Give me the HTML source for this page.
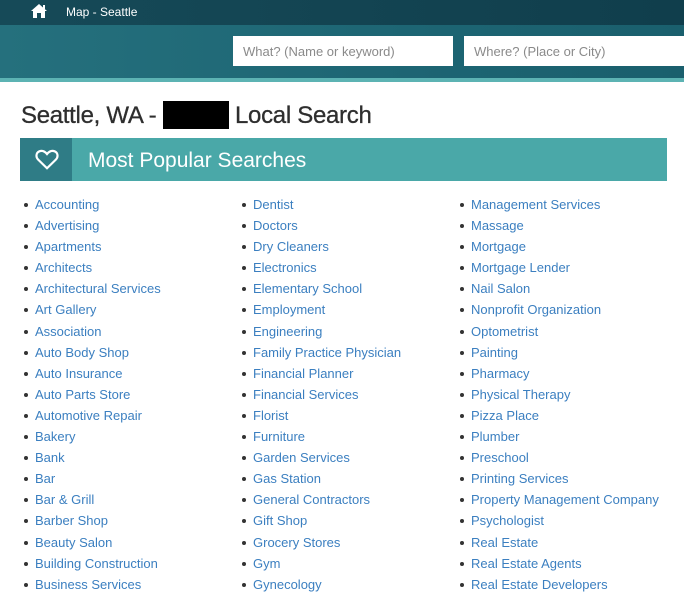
<!DOCTYPE html>
<html><head><style>
body{margin:0;width:684px;height:600px;overflow:hidden;background:#fff;font-family:"Liberation Sans",sans-serif;}
.top{position:absolute;left:0;top:0;width:684px;height:25px;background:linear-gradient(90deg,#164a58,#103e4c);}
.band{position:absolute;left:0;top:25px;width:684px;height:53px;background:linear-gradient(90deg,#25707d,#1d6573 60%,#1a5f6d);}
.line{position:absolute;left:0;top:78px;width:684px;height:4px;background:#5cb3b3;}
.crumb{position:absolute;left:66px;top:5px;color:#fff;font-size:12px;}
.inp{position:absolute;top:36px;height:30px;background:#fff;color:#8a8a8a;font-size:13px;line-height:32px;padding-left:10px;box-sizing:border-box;}
h1{position:absolute;left:21px;top:101px;margin:0;font-size:24px;font-weight:normal;color:#2e2e2e;letter-spacing:-0.3px;-webkit-text-stroke:0.3px #2e2e2e;}
.red{display:inline-block;width:66px;height:28px;background:#000;vertical-align:-6px;}
.ban{position:absolute;left:20px;top:138px;width:647px;height:43px;background:#4aa8a8;}
.ico{position:absolute;left:0;top:0;width:52px;height:43px;background:#2f7c86;}
.bt{position:absolute;left:68px;top:11px;color:#fff;font-size:21px;}
.col{position:absolute;top:196px;margin:0;padding:0;list-style:none;}
.col li{height:21.1px;line-height:17px;font-size:13px;color:#3b7fc0;position:relative;padding-left:11px;}
.col li:before{content:"";position:absolute;left:0;top:7px;width:4px;height:4px;border-radius:50%;background:#333;}
</style></head><body>
<div class="top"></div><div class="band"></div><div class="line"></div>
<svg style="position:absolute;left:30px;top:3px" width="18" height="16" viewBox="0 0 18 16"><path d="M9 1L1 8h2v7h4v-5h4v5h4V8h2z" fill="#fff"/><rect x="13" y="2" width="2" height="4" fill="#fff"/></svg>
<div class="crumb">Map - Seattle</div>
<div class="inp" style="left:233px;width:220px">What? (Name or keyword)</div>
<div class="inp" style="left:464px;width:220px">Where? (Place or City)</div>
<h1>Seattle, WA - <span class="red"></span> Local Search</h1>
<div class="ban"><div class="ico"><svg style="position:absolute;left:15px;top:11px" width="24" height="21" viewBox="0 0 22 19"><path d="M11 17.5L2.8 9.5C0.5 7 1 3.2 4 2 6.5 1 9 2 11 4.5 13 2 15.5 1 18 2 21 3.2 21.5 7 19.2 9.5Z" fill="none" stroke="#fff" stroke-width="2"/></svg></div><div class="bt">Most Popular Searches</div></div>
<ul class="col" style="left:24px">
<li>Accounting</li><li>Advertising</li><li>Apartments</li><li>Architects</li><li>Architectural Services</li><li>Art Gallery</li><li>Association</li><li>Auto Body Shop</li><li>Auto Insurance</li><li>Auto Parts Store</li><li>Automotive Repair</li><li>Bakery</li><li>Bank</li><li>Bar</li><li>Bar &amp; Grill</li><li>Barber Shop</li><li>Beauty Salon</li><li>Building Construction</li><li>Business Services</li></ul>
<ul class="col" style="left:242px">
<li>Dentist</li><li>Doctors</li><li>Dry Cleaners</li><li>Electronics</li><li>Elementary School</li><li>Employment</li><li>Engineering</li><li>Family Practice Physician</li><li>Financial Planner</li><li>Financial Services</li><li>Florist</li><li>Furniture</li><li>Garden Services</li><li>Gas Station</li><li>General Contractors</li><li>Gift Shop</li><li>Grocery Stores</li><li>Gym</li><li>Gynecology</li></ul>
<ul class="col" style="left:460px">
<li>Management Services</li><li>Massage</li><li>Mortgage</li><li>Mortgage Lender</li><li>Nail Salon</li><li>Nonprofit Organization</li><li>Optometrist</li><li>Painting</li><li>Pharmacy</li><li>Physical Therapy</li><li>Pizza Place</li><li>Plumber</li><li>Preschool</li><li>Printing Services</li><li>Property Management Company</li><li>Psychologist</li><li>Real Estate</li><li>Real Estate Agents</li><li>Real Estate Developers</li></ul>
</body></html>
